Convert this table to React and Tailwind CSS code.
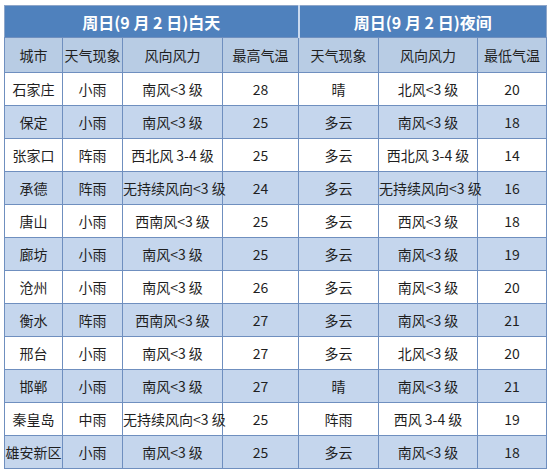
const day = [
  ['石家庄', '小雨', '南风<3 级', '28', '晴', '北风<3 级', '20'],
  ['保定', '小雨', '南风<3 级', '25', '多云', '南风<3 级', '18'],
  ['张家口', '阵雨', '西北风 3-4 级', '25', '多云', '西北风 3-4 级', '14'],
  ['承德', '阵雨', '无持续风向<3 级', '24', '多云', '无持续风向<3 级', '16'],
  ['唐山', '小雨', '西南风<3 级', '25', '多云', '西风<3 级', '18'],
  ['廊坊', '小雨', '南风<3 级', '25', '多云', '南风<3 级', '19'],
  ['沧州', '小雨', '南风<3 级', '26', '多云', '南风<3 级', '20'],
  ['衡水', '阵雨', '西南风<3 级', '27', '多云', '南风<3 级', '21'],
  ['邢台', '小雨', '南风<3 级', '27', '多云', '北风<3 级', '20'],
  ['邯郸', '小雨', '南风<3 级', '27', '晴', '南风<3 级', '21'],
  ['秦皇岛', '中雨', '无持续风向<3 级', '25', '阵雨', '西风 3-4 级', '19'],
  ['雄安新区', '小雨', '南风<3 级', '25', '多云', '南风<3 级', '18'],
]

const heads = ['城市', '天气现象', '风向风力', '最高气温', '天气现象', '风向风力', '最低气温']
const widths = ['w-[58px]', 'w-[60px]', 'w-[100px]', 'w-[76px]', 'w-[80px]', 'w-[99px]', 'w-[69px]']

export default function App() {
  return (
    <div
      className="w-[550px] h-[472px] bg-white pt-[5px] pl-[4px] text-[#1f1f1f]"
      style={{ fontFamily: '"Microsoft YaHei", "Noto Sans CJK SC", sans-serif' }}
    >
      <table className="w-[542px] table-fixed border-collapse text-[14px] leading-none text-center border border-[#8ea6c9]">
        <colgroup>
          {widths.map((w, i) => (
            <col key={i} className={w} />
          ))}
        </colgroup>
        <thead>
          <tr className="h-[32px] bg-[#4f81bd] text-white text-[16px] font-bold">
            <th colSpan={4} className="border-r-2 border-[#c9d9ef]">周日(9 月 2 日)白天</th>
            <th colSpan={3}>周日(9 月 2 日)夜间</th>
          </tr>
          <tr className="h-[35px] bg-[#b8cce4]">
            {heads.map((h, i) => (
              <th key={i} className="font-normal border border-[#6f8fbf]">{h}</th>
            ))}
          </tr>
        </thead>
        <tbody>
          {day.map((row, r) => (
            <tr key={r} className={`h-[33px] ${r % 2 ? 'bg-[#c5d6ed]' : 'bg-white'}`}>
              {row.map((c, i) => (
                <td key={i} className="border border-[#6f8fbf] whitespace-nowrap px-0">{c}</td>
              ))}
            </tr>
          ))}
        </tbody>
      </table>
    </div>
  )
}
